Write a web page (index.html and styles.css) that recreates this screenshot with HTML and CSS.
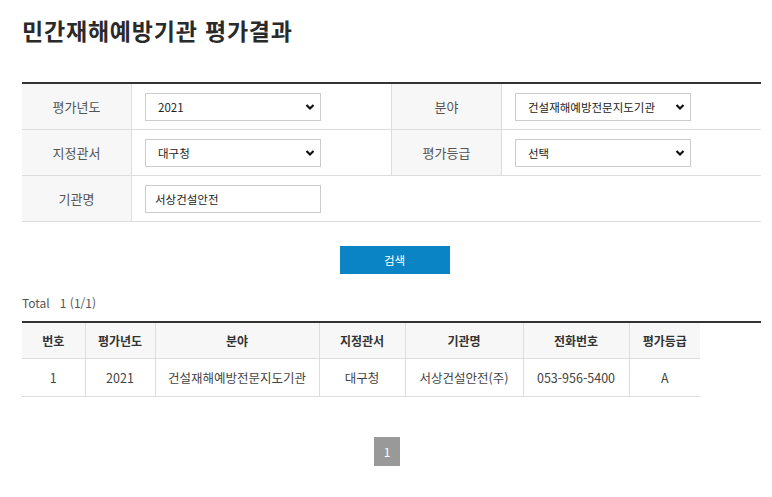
FILE: index.html
```html
<!DOCTYPE html>
<html lang="ko">
<head>
<meta charset="utf-8">
<title>민간재해예방기관 평가결과</title>
<link rel="stylesheet" href="styles.css">
</head>
<body>
<div class="page">
  <h1 class="title">민간재해예방기관 평가결과</h1>

  <div class="search">
    <div class="srow">
      <div class="slabel">평가년도</div>
      <div class="sval">
        <div class="sel"><span>2021</span><svg class="chev" viewBox="0 0 10 8" width="10" height="8"><path d="M1.5 2 L5 5.5 L8.5 2" fill="none" stroke="#111" stroke-width="2.2"/></svg></div>
      </div>
      <div class="slabel bl">분야</div>
      <div class="sval">
        <div class="sel"><span>건설재해예방전문지도기관</span><svg class="chev" viewBox="0 0 10 8" width="10" height="8"><path d="M1.5 2 L5 5.5 L8.5 2" fill="none" stroke="#111" stroke-width="2.2"/></svg></div>
      </div>
    </div>
    <div class="srow">
      <div class="slabel">지정관서</div>
      <div class="sval">
        <div class="sel"><span>대구청</span><svg class="chev" viewBox="0 0 10 8" width="10" height="8"><path d="M1.5 2 L5 5.5 L8.5 2" fill="none" stroke="#111" stroke-width="2.2"/></svg></div>
      </div>
      <div class="slabel bl">평가등급</div>
      <div class="sval">
        <div class="sel"><span>선택</span><svg class="chev" viewBox="0 0 10 8" width="10" height="8"><path d="M1.5 2 L5 5.5 L8.5 2" fill="none" stroke="#111" stroke-width="2.2"/></svg></div>
      </div>
    </div>
    <div class="srow">
      <div class="slabel">기관명</div>
      <div class="sval wide">
        <div class="inp">서상건설안전</div>
      </div>
    </div>
  </div>

  <div class="btnrow"><button class="btn">검색</button></div>

  <p class="total">Total&nbsp;&nbsp; 1 (1/1)</p>

  <div class="list">
    <table class="tbl">
      <colgroup>
        <col class="c1"><col class="c2"><col class="c3"><col class="c4"><col class="c5"><col class="c6"><col class="c7">
      </colgroup>
      <thead>
        <tr><th>번호</th><th>평가년도</th><th>분야</th><th>지정관서</th><th>기관명</th><th>전화번호</th><th>평가등급</th></tr>
      </thead>
      <tbody>
        <tr><td>1</td><td>2021</td><td>건설재해예방전문지도기관</td><td>대구청</td><td>서상건설안전(주)</td><td>053-956-5400</td><td>A</td></tr>
      </tbody>
    </table>
  </div>

  <div class="paging"><span class="pg">1</span></div>
</div>
</body>
</html>
```
FILE: styles.css
```css
html, body { margin: 0; padding: 0; background: #fff; }
body {
  font-family: "Noto Sans CJK KR", "Noto Sans", "Liberation Sans", sans-serif;
  color: #444;
}
.page { padding: 0 11px 0 22px; }

.title {
  margin: 15px 0 36px;
  font-size: 23px;
  line-height: 31px;
  font-weight: 700;
  letter-spacing: 0.8px;
  color: #2a2a2a;
}

.search { border-top: 2px solid #333; }
.srow {
  display: grid;
  grid-template-columns: 110px 259px 111px 1fr;
  height: 45px;
  border-bottom: 1px solid #ddd;
}
.slabel {
  background: #f7f7f7;
  border-right: 1px solid #ddd;
  display: flex; align-items: center; justify-content: center;
  font-size: 13px; color: #555;
}
.slabel.bl { border-left: 1px solid #ddd; }
.sval { display: flex; align-items: center; padding-left: 13px; }
.sval.wide { grid-column: 2 / 5; }
.sel, .inp {
  width: 176px; height: 28px; box-sizing: border-box;
  border: 1px solid #ccc; background: #fff;
  display: flex; align-items: center; justify-content: space-between;
  padding: 0 5px 0 12px;
  font-size: 11.5px; color: #222;
}
.inp { padding-left: 9px; }
.chev { flex: none; }

.btnrow { display: flex; justify-content: center; margin-top: 24px; padding-left: 6px; }
.btn {
  width: 110px; height: 28px; border: 0; background: #0b84c6; color: #fff;
  font-family: inherit; font-size: 11.5px; padding: 0; cursor: pointer;
}

.total { margin: 20px 0 9px; font-size: 12px; line-height: 18px; color: #555; }

.list { border-top: 2px solid #333; }
.tbl { border-collapse: collapse; width: 678px; table-layout: fixed; }
.c1 { width: 63px; } .c2 { width: 70px; } .c3 { width: 164px; } .c4 { width: 86px; }
.c5 { width: 118px; } .c6 { width: 106px; } .c7 { width: 71px; }
.tbl th, .tbl td {
  text-align: center; border-bottom: 1px solid #ddd; border-left: 1px solid #ddd; padding: 0;
}
.tbl th:first-child, .tbl td:first-child { border-left: 0; }
.tbl th { height: 35px; background: #f7f7f7; font-size: 12px; font-weight: 700; color: #333; }
.tbl td { height: 37px; font-size: 12.5px; color: #444; }

.paging { display: flex; justify-content: center; margin-top: 40px; padding-right: 9px; }
.pg {
  width: 26px; height: 29px; background: #999; color: #fff;
  display: flex; align-items: center; justify-content: center; font-size: 12px;
}
```
